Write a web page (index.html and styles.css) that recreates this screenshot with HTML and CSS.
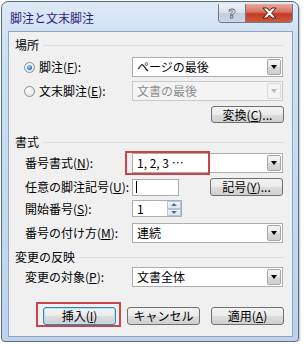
FILE: index.html
```html
<!DOCTYPE html>
<html lang="ja">
<head>
  <meta charset="UTF-8">
  <title>脚注と文末脚注</title>
  <link rel="stylesheet" href="styles.css">
</head>
<body>
  <div class="window">
    <div class="titlebar">
      <span class="title">脚注と文末脚注</span>
      <div class="caption-btns">
        <span class="cap-btn help">?</span>
        <span class="cap-btn close">
          <svg width="17" height="12" viewBox="0 0 17 12"><path d="M2 1h4l2.5 3 2.5-3h4l-4.4 5 4.4 5h-4L8.5 8 6 11H2l4.4-5z" fill="#fff" stroke="#4e1710" stroke-width="1" stroke-linejoin="round"/></svg>
        </span>
      </div>
    </div>
    <div class="client">
      <div class="group-head">場所</div>
      <div class="row r-foot">
        <span class="lbl"><span class="radio checked"></span>脚注(<u>F</u>):</span>
        <div class="combo"><span class="combo-text">ページの最後</span><span class="drop"></span></div>
      </div>
      <div class="row r-end">
        <span class="lbl"><span class="radio"></span>文末脚注(<u>E</u>):</span>
        <div class="combo disabled"><span class="combo-text">文書の最後</span><span class="drop"></span></div>
      </div>
      <div class="btn-line r-convert">
        <span class="btn">変換(<u>C</u>)...</span>
      </div>

      <div class="group-head g-format">書式</div>
      <div class="row r-numfmt">
        <span class="lbl">番号書式(<u>N</u>):</span>
        <div class="combo"><span class="combo-text">1, 2, 3 …</span><span class="drop"></span><span class="mark mark-fmt"></span></div>
      </div>
      <div class="row r-symbol">
        <span class="lbl">任意の脚注記号(<u>U</u>):</span>
        <div class="symbol-line">
          <span class="textbox"><span class="caret"></span></span>
          <span class="btn">記号(<u>Y</u>)...</span>
        </div>
      </div>
      <div class="row r-start">
        <span class="lbl">開始番号(<u>S</u>):</span>
        <span class="spin"><span class="spin-val">1</span><span class="spin-btns"><span class="up"></span><span class="down"></span></span></span>
      </div>
      <div class="row r-numbering">
        <span class="lbl">番号の付け方(<u>M</u>):</span>
        <div class="combo"><span class="combo-text">連続</span><span class="drop"></span></div>
      </div>

      <div class="group-head g-apply">変更の反映</div>
      <div class="row r-target">
        <span class="lbl">変更の対象(<u>P</u>):</span>
        <div class="combo"><span class="combo-text">文書全体</span><span class="drop"></span></div>
      </div>

      <div class="actions">
        <span class="btn default">挿入(<u>I</u>)<span class="mark mark-insert"></span></span>
        <span class="btn">キャンセル</span>
        <span class="btn">適用(<u>A</u>)</span>
      </div>
    </div>
  </div>
</body>
</html>
```

FILE: styles.css
```css
body {
  margin: 0;
  background: #fff;
  font-family: "Noto Sans CJK JP", "Noto Sans", sans-serif;
  font-size: 12px;
  color: #000;
}
u {
  text-decoration: underline;
  text-underline-offset: 1px;
}
.window {
  margin: 1px 0 0 1px;
  width: 298px;
  height: 341px;
  box-sizing: border-box;
  border: 1px solid #5b6b7f;
  border-radius: 7px 7px 4px 4px;
  background: linear-gradient(to bottom, #dde9f6 0, #cfe0f3 40px, #bdd3eb 100%);
  padding: 0 5px 4px 6px;
  display: flex;
  flex-direction: column;
  box-shadow: 1px 1px 2px rgba(0,0,0,0.25);
}
.titlebar {
  height: 29px;
  display: flex;
  justify-content: space-between;
  align-items: flex-start;
}
.title {
  margin: 9px 0 0 2px;
  line-height: 14px;
  font-size: 12px;
  color: #2b1f7a;
}
.caption-btns {
  display: flex;
  margin: 2px 0 0 0;
  border: 1px solid #6b7a8c;
  border-top: none;
  border-radius: 0 0 4px 4px;
  overflow: hidden;
  height: 18px;
}
.cap-btn {
  display: flex;
  align-items: center;
  justify-content: center;
  height: 18px;
}
.help {
  width: 26px;
  background: linear-gradient(to bottom, #eef2f7 0, #d8e1ec 50%, #c3cedc 51%, #cdd7e4 100%);
  border-right: 1px solid #6b7a8c;
  color: #fff;
  font-family: "DejaVu Sans", sans-serif;
  font-weight: bold;
  font-size: 13px;
  -webkit-text-stroke: 0.8px #5c6a80;
}
.close {
  width: 46px;
  background: linear-gradient(to bottom, #e9a99f 0, #d8705f 45%, #c23a24 55%, #cf5a3e 100%);
}
.client {
  height: 306px;
  box-sizing: border-box;
  border: 1px solid #8ea4bd;
  background: #f0f0f0;
  padding: 0 8px 0 6px;
}
.group-head {
  display: flex;
  align-items: center;
  height: 14px;
  line-height: 14px;
  margin-top: 6px;
  gap: 4px;
}
.group-head::after {
  content: "";
  flex: 1;
  height: 1px;
  background: #d7e0e8;
}
.row {
  display: grid;
  grid-template-columns: 107px 151px;
  align-items: center;
  padding-left: 10px;
}
.lbl {
  display: flex;
  align-items: center;
  white-space: nowrap;
  line-height: 14px;
}
.radio {
  width: 11px;
  height: 11px;
  box-sizing: border-box;
  border-radius: 50%;
  border: 1px solid #8e8f8f;
  background: radial-gradient(circle at 40% 35%, #ffffff 0, #e4e4e4 70%, #d0d0d0 100%);
  margin: 0 4px 0 -1px;
  position: relative;
}
.radio.checked::after {
  content: "";
  position: absolute;
  left: 2px;
  top: 2px;
  width: 5px;
  height: 5px;
  border-radius: 50%;
  background: radial-gradient(circle at 40% 35%, #a9e3ff 0, #2d8fd6 50%, #0b4f91 100%);
}
.combo {
  position: relative;
  height: 20px;
  box-sizing: border-box;
  border: 1px solid #abadb3;
  background: #fff;
  display: flex;
  align-items: center;
  padding: 0 1px 0 4px;
}
.combo-text {
  flex: 1;
  line-height: 14px;
}
.drop {
  width: 14px;
  height: 16px;
  box-sizing: border-box;
  border: 1px solid #a3a8ae;
  border-radius: 2px;
  background: linear-gradient(to bottom, #f6f6f6 0, #e6e6e6 50%, #d8d8d8 51%, #d0d0d0 100%);
  display: flex;
  align-items: center;
  justify-content: center;
}
.drop::after {
  content: "";
  border-left: 3.5px solid transparent;
  border-right: 3.5px solid transparent;
  border-top: 4px solid #000;
}
.combo.disabled {
  background: #f4f4f4;
  border-color: #c9cacc;
  color: #8d8d8d;
}
.combo.disabled .drop {
  border-color: #dadada;
  background: #f4f4f4;
}
.combo.disabled .drop::after {
  border-top-color: #b8b8b8;
}
.r-foot { margin-top: 5px; }
.r-end { margin-top: 4px; }
.btn-line {
  display: flex;
  justify-content: flex-end;
  margin-top: 5px;
}
.btn {
  position: relative;
  width: 73px;
  height: 17px;
  box-sizing: border-box;
  border: 1px solid #707070;
  border-radius: 3px;
  background: linear-gradient(to bottom, #f3f3f3 0, #ebebeb 50%, #dddddd 51%, #cfcfcf 100%);
  display: flex;
  align-items: center;
  justify-content: center;
  line-height: 14px;
}
.g-format { margin-top: 12px; }
.r-numfmt { margin-top: 4px; }
.mark {
  position: absolute;
  border: 2px solid #c8464b;
  pointer-events: none;
}
.mark-fmt {
  left: -8px;
  top: -3px;
  width: 81px;
  height: 20px;
}
.r-symbol { margin-top: 5px; }
.symbol-line {
  display: flex;
  justify-content: space-between;
  align-items: center;
}
.symbol-line .btn { height: 18px; }
.textbox {
  width: 47px;
  height: 17px;
  box-sizing: border-box;
  border: 1px solid #abadb3;
  background: #fff;
  display: flex;
  align-items: center;
  padding-left: 3px;
}
.caret {
  width: 1px;
  height: 12px;
  background: #000;
}
.r-start { margin-top: 4px; }
.spin {
  width: 50px;
  height: 17px;
  box-sizing: border-box;
  border: 1px solid #abadb3;
  background: #fff;
  display: flex;
  align-items: center;
  padding-left: 4px;
}
.spin-val {
  flex: 1;
  line-height: 14px;
}
.spin-btns {
  width: 14px;
  height: 15px;
  display: flex;
  flex-direction: column;
}
.spin-btns span {
  flex: 1;
  box-sizing: border-box;
  border: 1px solid #b8c4d2;
  background: linear-gradient(to bottom, #f4f7fa, #dfe6ee);
  display: flex;
  align-items: center;
  justify-content: center;
}
.spin-btns .up::after {
  content: "";
  border-left: 3px solid transparent;
  border-right: 3px solid transparent;
  border-bottom: 3px solid #4a6f9a;
}
.spin-btns .down::after {
  content: "";
  border-left: 3px solid transparent;
  border-right: 3px solid transparent;
  border-top: 3px solid #4a6f9a;
}
.r-numbering { margin-top: 6px; }
.g-apply { margin-top: 7px; }
.r-target { margin-top: 3px; }
.actions {
  display: flex;
  justify-content: flex-end;
  gap: 11px;
  margin-top: 20px;
}
.actions .btn { height: 18px; }
.btn.default {
  border-color: #3c7fb1;
  box-shadow: inset 0 0 0 1px #aee3f8;
}
.mark-insert {
  left: -8px;
  top: -6px;
  width: 81px;
  height: 21px;
}
```
